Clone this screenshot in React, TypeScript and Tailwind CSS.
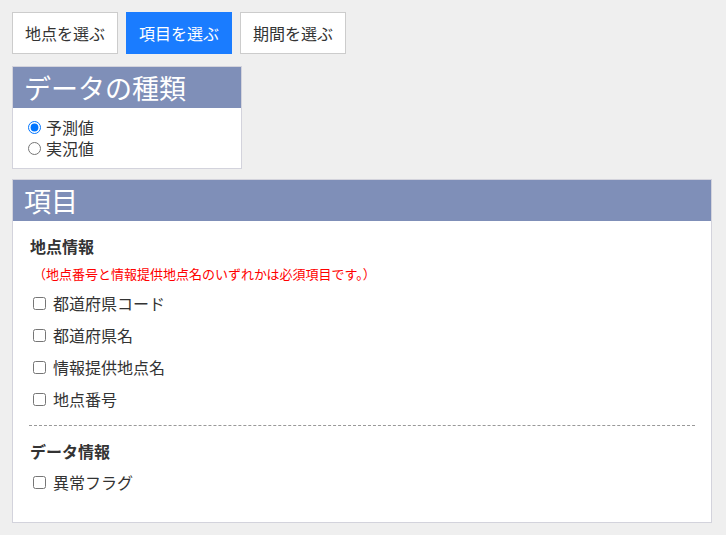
import { useState } from 'react'

const TABS = ['地点を選ぶ', '項目を選ぶ', '期間を選ぶ']

const POINT_ITEMS = ['都道府県コード', '都道府県名', '情報提供地点名', '地点番号']
const DATA_ITEMS = ['異常フラグ']

function CheckRow({ label }: { label: string }) {
  return (
    <label className="flex h-[32px] items-center gap-[7px] pl-[4px] text-[16px] text-[#333]">
      <input type="checkbox" className="m-0 h-[13px] w-[13px]" />
      <span>{label}</span>
    </label>
  )
}

export default function App() {
  const [tab, setTab] = useState(1)
  const [kind, setKind] = useState('forecast')

  return (
    <div
      className="min-h-[535px] bg-[#efefef] px-[12px] pt-[12px]"
      style={{ fontFamily: '"Noto Sans CJK JP", "Noto Sans", sans-serif' }}
    >
      <div className="flex gap-[8px]">
        {TABS.map((t, i) => (
          <button
            key={t}
            type="button"
            onClick={() => setTab(i)}
            className={`h-[42px] w-[106px] border text-[16px] ${
              tab === i ? 'border-[#1a7cff] bg-[#1a7cff] text-white' : 'border-[#cccccc] bg-white text-[#333]'
            }`}
          >
            {t}
          </button>
        ))}
      </div>

      <div className="mt-[12px] w-[230px] border border-[#d3d3dc] bg-white">
        <div className="flex h-[41px] items-center bg-[#7f8fb8] px-[11px] text-[27px] leading-none text-white">
          データの種類
        </div>
        <div className="flex flex-col px-[15px] pt-[9px] pb-[9px] text-[16px] text-[#333]">
          <label className="flex h-[21px] items-center gap-[5px]">
            <input
              type="radio"
              name="kind"
              checked={kind === 'forecast'}
              onChange={() => setKind('forecast')}
              className="m-0 h-[13px] w-[13px]"
            />
            <span className="leading-[21px]">予測値</span>
          </label>
          <label className="flex h-[21px] items-center gap-[5px]">
            <input
              type="radio"
              name="kind"
              checked={kind === 'actual'}
              onChange={() => setKind('actual')}
              className="m-0 h-[13px] w-[13px]"
            />
            <span className="leading-[21px]">実況値</span>
          </label>
        </div>
      </div>

      <div className="mt-[10px] w-[700px] border border-[#d3d3dc] bg-white">
        <div className="flex h-[41px] items-center bg-[#7f8fb8] px-[11px] text-[27px] leading-none text-white">
          項目
        </div>
        <div className="px-[16px] pt-[14px] pb-[24px]">
          <div className="pl-[1px] text-[16px] font-bold leading-[22px] text-[#333]">地点情報</div>
          <div className="mt-[7px] pl-[4px] text-[13px] leading-[20px] text-[#ff0000]">
            （地点番号と情報提供地点名のいずれかは必須項目です。）
          </div>
          <div className="mt-[3px]">
            {POINT_ITEMS.map((item) => (
              <CheckRow key={item} label={item} />
            ))}
          </div>
          <div className="mt-[10px] border-t border-dashed border-[#999]" />
          <div className="mt-[14px] pl-[1px] text-[16px] font-bold leading-[22px] text-[#333]">データ情報</div>
          <div className="mt-[4px]">
            {DATA_ITEMS.map((item) => (
              <CheckRow key={item} label={item} />
            ))}
          </div>
        </div>
      </div>
    </div>
  )
}
